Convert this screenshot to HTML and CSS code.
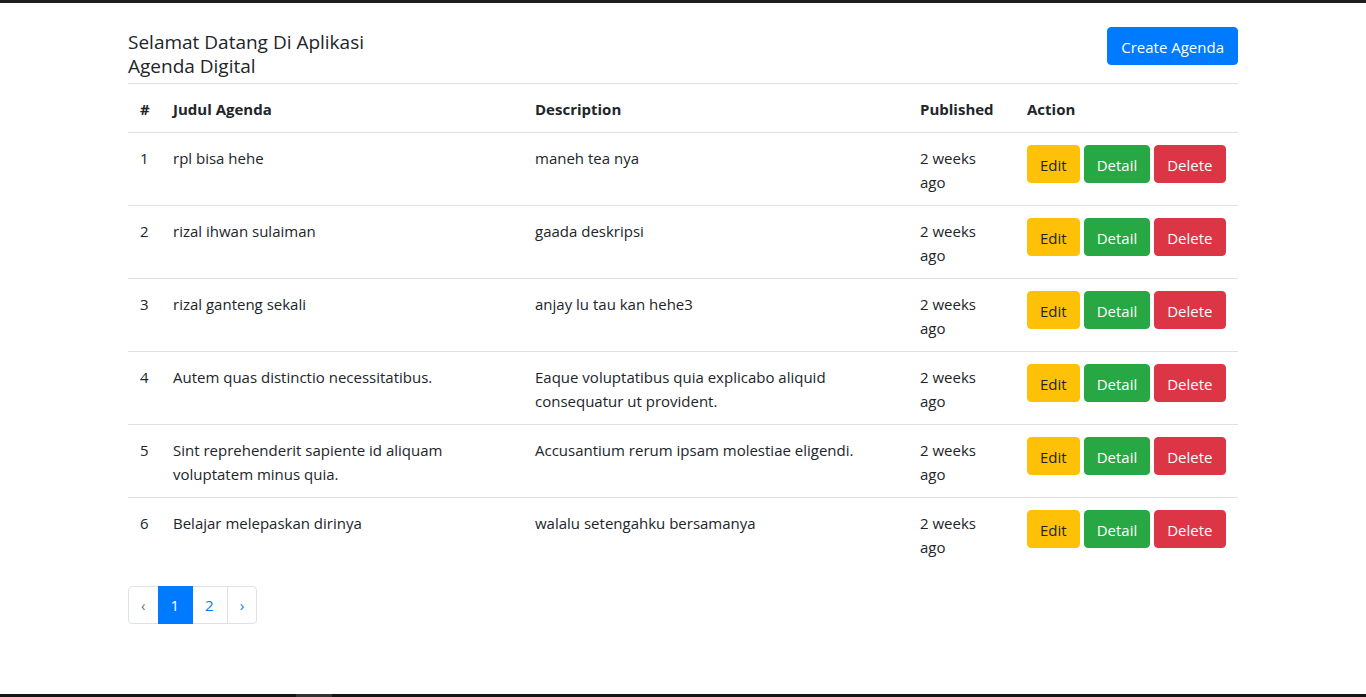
FILE: index.html
```html
<!DOCTYPE html>
<html lang="id">
<head>
<meta charset="utf-8">
<title>Agenda Digital</title>
<link rel="stylesheet" href="styles.css">
</head>
<body>
<div class="frame-top"></div>
<main class="container">
  <header class="page-head">
    <h5 class="title">Selamat Datang Di Aplikasi<br>Agenda Digital</h5>
    <a class="btn btn-primary" href="#">Create Agenda</a>
  </header>
  <table class="table">
    <colgroup>
      <col class="c-no"><col class="c-judul"><col class="c-desc"><col class="c-pub"><col class="c-act">
    </colgroup>
    <thead>
      <tr><th>#</th><th>Judul Agenda</th><th>Description</th><th>Published</th><th>Action</th></tr>
    </thead>
    <tbody>
      <tr><td>1</td><td>rpl bisa hehe</td><td>maneh tea nya</td><td>2 weeks ago</td>
        <td class="actions"><a class="btn btn-warning" href="#">Edit</a> <a class="btn btn-success" href="#">Detail</a> <a class="btn btn-danger" href="#">Delete</a></td></tr>
      <tr><td>2</td><td>rizal ihwan sulaiman</td><td>gaada deskripsi</td><td>2 weeks ago</td>
        <td class="actions"><a class="btn btn-warning" href="#">Edit</a> <a class="btn btn-success" href="#">Detail</a> <a class="btn btn-danger" href="#">Delete</a></td></tr>
      <tr><td>3</td><td>rizal ganteng sekali</td><td>anjay lu tau kan hehe3</td><td>2 weeks ago</td>
        <td class="actions"><a class="btn btn-warning" href="#">Edit</a> <a class="btn btn-success" href="#">Detail</a> <a class="btn btn-danger" href="#">Delete</a></td></tr>
      <tr><td>4</td><td>Autem quas distinctio necessitatibus.</td><td>Eaque voluptatibus quia explicabo aliquid consequatur ut provident.</td><td>2 weeks ago</td>
        <td class="actions"><a class="btn btn-warning" href="#">Edit</a> <a class="btn btn-success" href="#">Detail</a> <a class="btn btn-danger" href="#">Delete</a></td></tr>
      <tr><td>5</td><td>Sint reprehenderit sapiente id aliquam voluptatem minus quia.</td><td>Accusantium rerum ipsam molestiae eligendi.</td><td>2 weeks ago</td>
        <td class="actions"><a class="btn btn-warning" href="#">Edit</a> <a class="btn btn-success" href="#">Detail</a> <a class="btn btn-danger" href="#">Delete</a></td></tr>
      <tr><td>6</td><td>Belajar melepaskan dirinya</td><td>walalu setengahku bersamanya</td><td>2 weeks ago</td>
        <td class="actions"><a class="btn btn-warning" href="#">Edit</a> <a class="btn btn-success" href="#">Detail</a> <a class="btn btn-danger" href="#">Delete</a></td></tr>
    </tbody>
  </table>
  <nav class="pagination">
    <span class="page-link prev">&lsaquo;</span>
    <span class="page-link num active">1</span>
    <a class="page-link num" href="#">2</a>
    <a class="page-link next" href="#">&rsaquo;</a>
  </nav>
</main>
<div class="frame-bottom"><span class="frame-seg"></span></div>
</body>
</html>
```
FILE: styles.css
```css
* { box-sizing: border-box; }
html, body { margin: 0; padding: 0; height: 100%; }
body {
  font-family: "Open Sans", "Noto Sans", sans-serif;
  font-size: 15px;
  line-height: 24px;
  color: #212529;
  background: #fff;
  position: relative;
  overflow: hidden;
}
.frame-top { height: 3px; background: #1e1e1e; }
.frame-bottom {
  position: absolute; left: 0; right: 0; bottom: 0; height: 3px; background: #151515;
}
.frame-seg { position: absolute; left: 296px; width: 36px; top: 0; bottom: 0; background: #333; }
.container { width: 1110px; margin: 0 auto; }
.page-head {
  display: flex; justify-content: space-between; align-items: flex-start;
  padding-top: 24px; height: 80px;
}
.title {
  margin: 3px 0 0; font-size: 19px; line-height: 24px; font-weight: 400;
}
.btn {
  display: inline-block; text-decoration: none; font-size: 15px; line-height: 24px;
  padding: 7px 12px 5px; border: 1px solid transparent; border-radius: 4px; color: #fff;
  vertical-align: middle;
}
.btn-primary { background: #007bff; border-color: #007bff; padding-left: 13px; padding-right: 13px; }
.btn-warning { background: #ffc107; border-color: #ffc107; color: #212529; }
.btn-success { background: #28a745; border-color: #28a745; }
.btn-danger { background: #dc3545; border-color: #dc3545; }
.table { width: 100%; border-collapse: collapse; table-layout: fixed; margin-bottom: 16px; }
.c-no { width: 33px; } .c-judul { width: 362px; } .c-desc { width: 385px; } .c-pub { width: 107px; } .c-act { width: 223px; }
.table th, .table td {
  padding: 13px 12px 11px; border-top: 1px solid #dee2e6; vertical-align: top; text-align: left;
}
.table th { font-weight: 700; }
.table td.actions { white-space: nowrap; font-size: 0; padding: 12px; }
.table td.actions .btn { margin-right: 4px; font-size: 15px; }
.pagination { display: flex; }
.page-link {
  display: block; padding: 7px 12px; line-height: 22px; font-size: 15px;
  color: #007bff; text-decoration: none; border: 1px solid #dee2e6; margin-left: -1px; background: #fff;
}
.page-link.num { padding-left: 12px; padding-right: 13px; }
.page-link.prev { margin-left: 0; border-radius: 4px 0 0 4px; color: #6c757d; }
.page-link.next { border-radius: 0 4px 4px 0; }
.page-link.active { background: #007bff; border-color: #007bff; color: #fff; position: relative; z-index: 1; }
```
